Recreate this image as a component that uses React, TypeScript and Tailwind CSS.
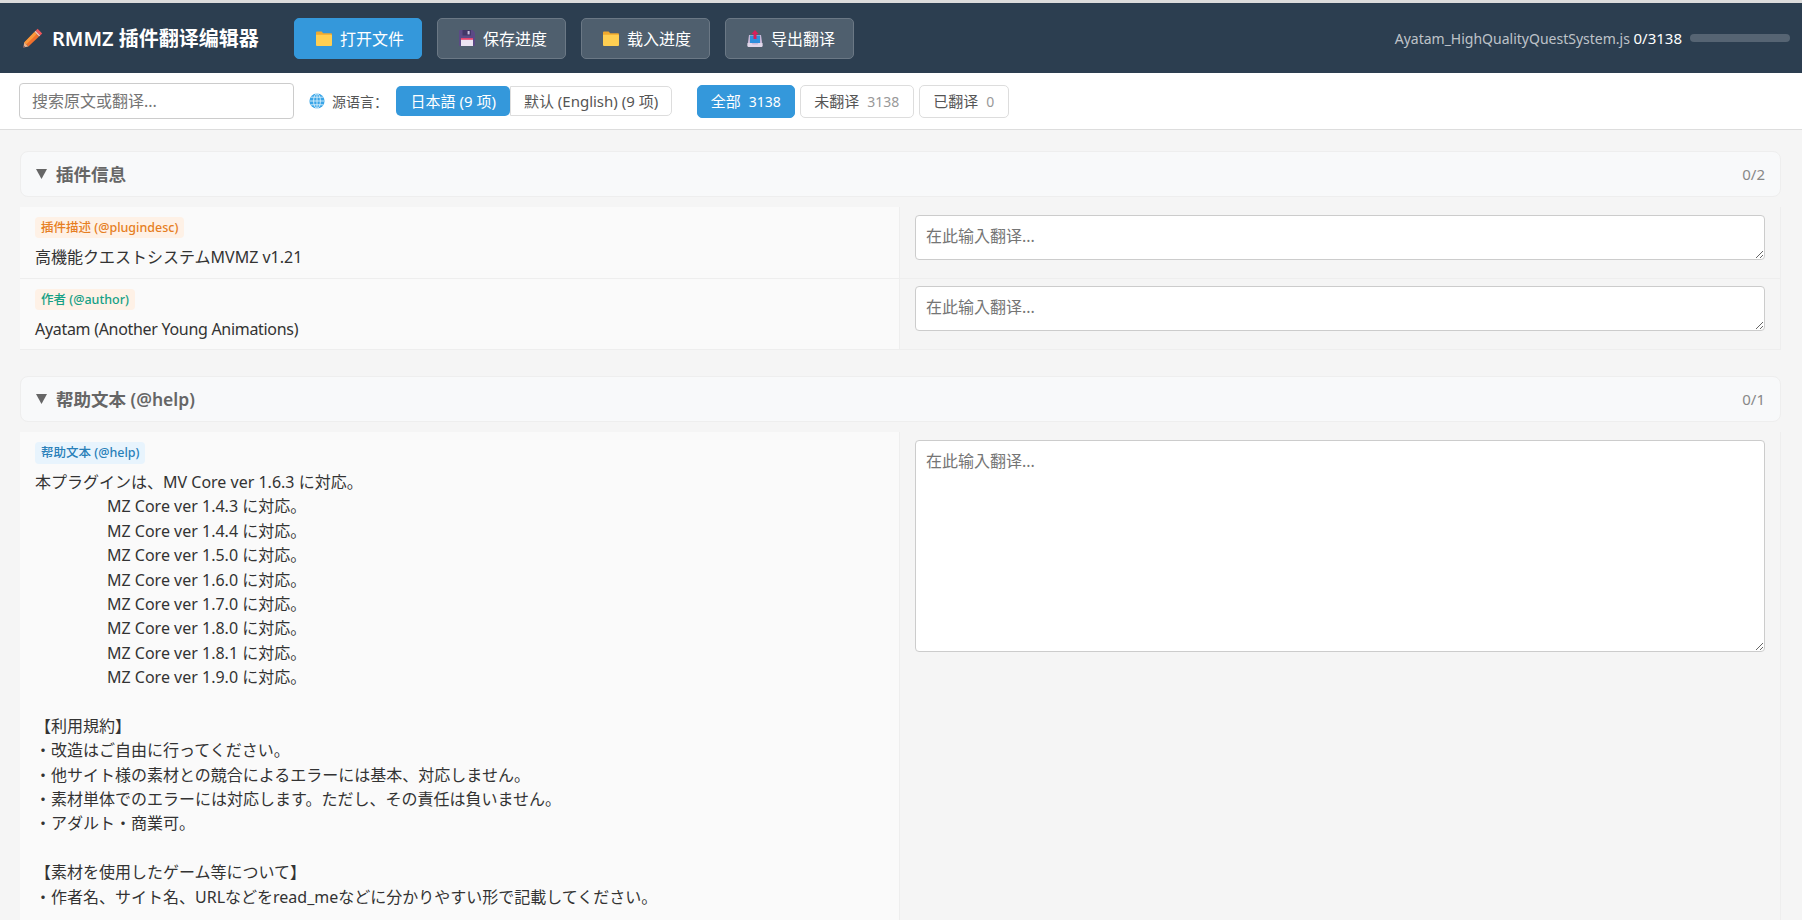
const helpLines = [
  '本プラグインは、MV Core ver 1.6.3 に対応。',
  '\tMZ Core ver 1.4.3 に対応。',
  '\tMZ Core ver 1.4.4 に対応。',
  '\tMZ Core ver 1.5.0 に対応。',
  '\tMZ Core ver 1.6.0 に対応。',
  '\tMZ Core ver 1.7.0 に対応。',
  '\tMZ Core ver 1.8.0 に対応。',
  '\tMZ Core ver 1.8.1 に対応。',
  '\tMZ Core ver 1.9.0 に対応。',
  '',
  '【利用規約】',
  '・改造はご自由に行ってください。',
  '・他サイト様の素材との競合によるエラーには基本、対応しません。',
  '・素材単体でのエラーには対応します。ただし、その責任は負いません。',
  '・アダルト・商業可。',
  '',
  '【素材を使用したゲーム等について】',
  '・作者名、サイト名、URLなどをread_meなどに分かりやすい形で記載してください。',
];

function PencilIcon() {
  return (
    <svg width="20" height="20" viewBox="0 0 20 20" className="shrink-0">
      <path d="M14.6 0.8 19.2 5.4 17.2 7.4 12.6 2.8Z" fill="#f0565a" />
      <path d="M12.6 2.8 17.2 7.4 16 8.6 11.4 4Z" fill="#f6c1b0" />
      <path d="M11.4 4 16 8.6 5.4 18.6 1.2 14.4Z" fill="#f0702c" />
      <path d="M11.4 4 13.6 6.2 3.2 16.4 1.2 14.4Z" fill="#fb9a3c" />
      <path d="M1.2 14.4 5.4 18.6 0.4 19.6Z" fill="#e8b48e" />
      <path d="M0.8 17.6 2.4 19.2 0.4 19.6Z" fill="#7a4a5a" />
    </svg>
  );
}

function FolderIcon() {
  return (
    <svg width="16" height="15" viewBox="0 0 16 15" className="shrink-0">
      <path d="M0 1.5A1 1 0 0 1 1 .5h4.6l1.6 1.8H15a1 1 0 0 1 1 1V5H0Z" fill="#f0a92e" />
      <path d="M0 3.8h15a1 1 0 0 1 1 1V14a1 1 0 0 1-1 1H1a1 1 0 0 1-1-1Z" fill="#ffcf52" />
    </svg>
  );
}

function FloppyIcon() {
  return (
    <svg width="16" height="16" viewBox="0 0 16 16" className="shrink-0">
      <path d="M1 0h12.5L16 2.5V15a1 1 0 0 1-1 1H1a1 1 0 0 1-1-1V1a1 1 0 0 1 1-1Z" fill="#5c4a86" />
      <rect x="3.5" y="0" width="8.5" height="5.5" fill="#433768" />
      <rect x="8.6" y="1" width="2" height="3.4" fill="#c9bfe0" />
      <rect x="2" y="8" width="12" height="8" fill="#ece4f2" />
      <rect x="2" y="8" width="12" height="1.8" fill="#e8436e" />
    </svg>
  );
}

function OutboxIcon() {
  return (
    <svg width="16" height="17" viewBox="-0.5 0 16 17" className="shrink-0">
      <path d="M1.5 5h12L15 15.5a1.5 1.5 0 0 1-1.5 1.5h-12A1.5 1.5 0 0 1 0 15.5Z" fill="#c8b8d8" />
      <rect x="2.5" y="5.5" width="10" height="7.5" fill="#2f8fdc" />
      <path d="M0 13h4l1 1.6h5l1-1.6h4v2.5a1.5 1.5 0 0 1-1.5 1.5h-12A1.5 1.5 0 0 1 0 15.5Z" fill="#e2d8ea" />
      <path d="M7.5 0 11 4H9v5H6V4H4Z" fill="#d81e5b" />
    </svg>
  );
}

function GlobeIcon() {
  return (
    <svg width="16" height="16" viewBox="0 0 16 16" className="shrink-0">
      <circle cx="8" cy="8" r="7.6" fill="#39a5e8" />
      <g fill="none" stroke="#d6eefb" strokeWidth="0.9">
        <ellipse cx="8" cy="8" rx="3.4" ry="7.4" />
        <path d="M8 .5v15M.5 8h15M1.6 4.2h12.8M1.6 11.8h12.8" />
      </g>
    </svg>
  );
}

function ToolButton({ icon, label, primary }: { icon: React.ReactNode; label: string; primary?: boolean }) {
  return (
    <button
      className={`flex h-[41px] items-center gap-[8px] rounded-[5px] border pl-[21px] text-[16px] text-white ${
        primary ? 'w-[128px] border-[#3498db] bg-[#3498db]' : 'w-[129px] border-[#6b7885] bg-[#4f5f6e]'
      }`}
    >
      {icon}
      <span className="pt-[1px]">{label}</span>
    </button>
  );
}

function FilterPill({ label, count, active }: { label: string; count: number; active?: boolean }) {
  return (
    <button
      className={`flex h-[33px] items-center gap-[8px] rounded-[5px] border text-[15px] ${
        active
          ? 'border-[#3498db] bg-[#3498db] px-[13px] text-white'
          : 'border-[#dddddd] bg-white px-[13.5px] text-[#555555]'
      }`}
    >
      <span>{label}</span>
      <span className={`text-[14px] ${active ? 'text-white' : 'text-[#999999]'}`}>{count}</span>
    </button>
  );
}

function SectionHeader({ title, count }: { title: string; count: string }) {
  return (
    <div className="flex h-[46px] items-center justify-between rounded-[8px] border border-[#eeeeee] bg-[#f8f9fa] px-[15px]">
      <div className="flex items-center gap-[9px] text-[17.5px] font-semibold text-[#666666]">
        <svg width="11" height="10" viewBox="0 0 11 10">
          <path d="M0 0h11L5.5 10Z" fill="#666666" />
        </svg>
        <span>{title}</span>
      </div>
      <span className="text-[15px] text-[#888888]">{count}</span>
    </div>
  );
}

function TranslateBox({ height }: { height: string }) {
  return (
    <textarea
      placeholder="在此输入翻译..."
      className={`block w-full rounded-[4px] border-[1.5px] border-[#cccccc] bg-white px-[10px] py-[8px] text-[16px] leading-[24px] text-[#333333] placeholder:text-[#757575] ${height}`}
    />
  );
}

function Row({
  tag,
  tagClass,
  text,
  textClass,
  rowClass,
  boxClass,
}: {
  tag: string;
  tagClass: string;
  text: string;
  textClass?: string;
  rowClass: string;
  boxClass: string;
}) {
  return (
    <div className={`flex ${rowClass}`}>
      <div className="w-[880px] border-r border-[#eeeeee] bg-[#fafafa] pl-[15px] pt-[10px]">
        <span className={`block h-[21px] w-fit rounded-[4px] px-[6px] text-[12.5px] font-medium leading-[21px] ${tagClass}`}>
          {tag}
        </span>
        <div className={`mt-[7px] text-[16px] leading-[24px] text-[#333333] ${textClass ?? ''}`}>{text}</div>
      </div>
      <div className={`flex-1 px-[15px] ${boxClass}`}>
        <TranslateBox height="h-[45px]" />
      </div>
    </div>
  );
}

export default function App() {
  return (
    <div className="flex h-screen flex-col overflow-hidden bg-[#f5f5f5] font-['Noto_Sans','Noto_Sans_CJK_SC',sans-serif]">
      <div className="h-[3px] shrink-0 bg-[#dcdcdc]" />

      {/* Header */}
      <header className="flex h-[70px] shrink-0 items-center bg-[#2c3e50] pl-[23px] pr-[12px] text-white">
        <div className="flex w-[271px] items-center gap-[9px] text-[20px] font-semibold">
          <PencilIcon />
          <span className="pt-[1px]">RMMZ 插件翻译编辑器</span>
        </div>
        <div className="flex gap-[15px]">
          <ToolButton primary icon={<FolderIcon />} label="打开文件" />
          <ToolButton icon={<FloppyIcon />} label="保存进度" />
          <ToolButton icon={<FolderIcon />} label="载入进度" />
          <ToolButton icon={<OutboxIcon />} label="导出翻译" />
        </div>
        <div className="ml-auto flex items-center gap-[8px] text-[14px]">
          <span>
            <span className="text-white/70">Ayatam_HighQualityQuestSystem.js</span>{' '}
            <span className="text-[15px]">0/3138</span>
          </span>
          <div className="h-[8px] w-[100px] rounded-full bg-white/20" />
        </div>
      </header>

      {/* Toolbar */}
      <div className="flex h-[57px] shrink-0 items-center border-b border-[#dddddd] bg-white pl-[19px]">
        <input
          placeholder="搜索原文或翻译..."
          className="h-[36px] w-[275px] rounded-[4px] border-[1.5px] border-[#cccccc] px-[12px] text-[16px] placeholder:text-[#757575]"
        />
        <div className="ml-[15px] flex items-center gap-[7px] text-[14px] text-[#555555]">
          <GlobeIcon />
          <span>源语言：</span>
        </div>
        <div className="ml-[8px] flex">
          <button className="h-[30px] rounded-[5px] bg-[#3498db] px-[14.5px] text-[15px] text-white">日本語 (9 项)</button>
          <button className="h-[30px] rounded-r-[5px] border border-[#dddddd] bg-white px-[12.5px] text-[15px] text-[#555555]">
            默认 (English) (9 项)
          </button>
        </div>
        <div className="ml-[25px] flex gap-[5px]">
          <FilterPill active label="全部" count={3138} />
          <FilterPill label="未翻译" count={3138} />
          <FilterPill label="已翻译" count={0} />
        </div>
      </div>

      {/* Content */}
      <main className="min-h-0 flex-1 overflow-hidden pl-[20px] pr-[21px] pt-[21px] font-['Noto_Sans','Noto_Sans_CJK_JP',sans-serif]">
        <SectionHeader title="插件信息" count="0/2" />
        <div className="mt-[10px] border-b border-r border-[#eeeeee]">
          <Row
            rowClass="h-[72px] border-b border-[#eeeeee]"
            boxClass="pt-[8px]"
            tag="插件描述 (@plugindesc)"
            tagClass="bg-[#fef1e6] text-[#e67e22]"
            text="高機能クエストシステムMVMZ v1.21"
          />
          <Row
            rowClass="h-[70px]"
            boxClass="pt-[7px]"
            tag="作者 (@author)"
            tagClass="bg-[#fef1e6] text-[#16a085]"
            text="Ayatam (Another Young Animations)"
            textClass="tracking-[-0.3px]"
          />
        </div>

        <div className="mt-[26px]">
          <SectionHeader title="帮助文本 (@help)" count="0/1" />
        </div>
        <div className="mt-[10px] flex border-r border-[#eeeeee]">
          <div className="w-[880px] shrink-0 border-r border-[#eeeeee] bg-[#fafafa] pb-[200px] pl-[15px] pt-[10px]">
            <span className="block h-[22px] w-fit rounded-[4px] bg-[#e8f4fd] px-[6px] text-[12.5px] font-medium leading-[22px] text-[#2980b9]">
              帮助文本 (@help)
            </span>
            <div className="mt-[6px] whitespace-pre-wrap text-[16px] leading-[24.4px] text-[#333333] [tab-size:72px]">
              {helpLines.map((line, i) => (
                <div key={i} className="h-[24.4px]">
                  {line}
                </div>
              ))}
            </div>
          </div>
          <div className="flex-1 px-[15px] pt-[8px]">
            <TranslateBox height="h-[212px]" />
          </div>
        </div>
      </main>
    </div>
  );
}
